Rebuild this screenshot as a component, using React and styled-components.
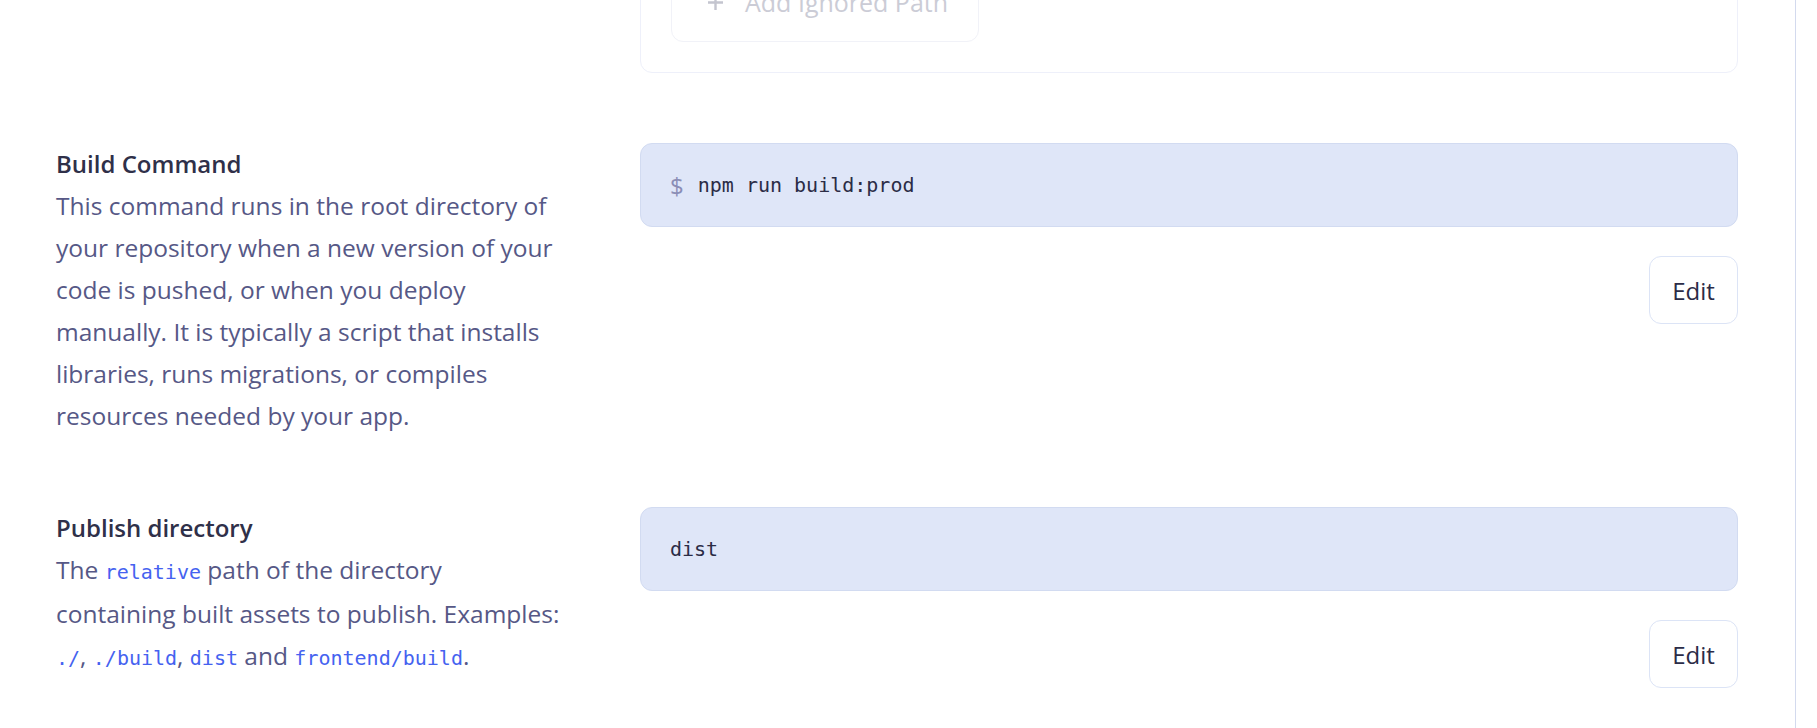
import React from "react";
import styled, { createGlobalStyle } from "styled-components";

const GlobalStyle = createGlobalStyle`
  html, body {
    margin: 0;
    padding: 0;
    background: #ffffff;
    overflow: hidden;
  }
  body {
    font-family: "Open Sans", "Noto Sans", sans-serif;
    -webkit-font-smoothing: antialiased;
  }
  * { box-sizing: border-box; }
`;

const Page = styled.div`
  display: flex;
  height: 728px;
  overflow: hidden;
  background: #ffffff;
`;

const Main = styled.main`
  width: 1796px;
  flex: none;
  border-right: 1px solid #d3daee;
  padding: 0 57px 0 56px;
  margin-top: -69px;
  display: flex;
  flex-direction: column;
  gap: 70px;
`;

const Section = styled.section`
  display: grid;
  grid-template-columns: 508px 1fr;
  column-gap: 76px;
  align-items: start;
`;

const Info = styled.div`
  display: flex;
  flex-direction: column;
`;

const Title = styled.h3`
  margin: 0;
  font-size: 24px;
  line-height: 42px;
  font-weight: 600;
  color: #2f3049;
`;

const Description = styled.p`
  margin: 0;
  font-size: 24.5px;
  line-height: 42px;
  font-weight: 400;
  color: #565886;
`;

const InlineCode = styled.code`
  font-family: "DejaVu Sans Mono", "Liberation Mono", monospace;
  font-size: 20px;
  color: #4562f0;
`;

const Controls = styled.div`
  display: flex;
  flex-direction: column;
`;

const Card = styled.div`
  border: 1px solid #eef0fa;
  border-radius: 12px;
  padding: 30px;
  display: flex;
`;

const GhostButton = styled.button`
  display: inline-flex;
  align-items: center;
  gap: 22px;
  height: 80px;
  padding: 0 30px 0 36px;
  border: 1px solid #f1f2f8;
  border-radius: 12px;
  background: #ffffff;
  color: #cbccd6;
  font-family: inherit;
  font-size: 25px;
  cursor: not-allowed;
`;

const CodeBox = styled.div`
  height: 84px;
  display: flex;
  align-items: center;
  padding: 0 29px;
  background: #dfe6f8;
  border: 1px solid #d2dbf1;
  border-radius: 12px;
  font-family: "DejaVu Sans Mono", "Liberation Mono", monospace;
  font-size: 20px;
  color: #2b2c46;
`;

const Prompt = styled.span`
  font-family: "Open Sans", "Noto Sans", sans-serif;
  font-size: 24px;
  color: #8b8eb6;
  margin-right: 14px;
`;

const Actions = styled.div`
  display: flex;
  justify-content: flex-end;
  margin-top: 29px;
`;

const EditButton = styled.button`
  width: 89px;
  height: 68px;
  border: 1px solid #dce4f6;
  border-radius: 12px;
  background: #ffffff;
  color: #2b2c47;
  font-family: inherit;
  font-size: 24px;
  cursor: pointer;
`;

const PlusIcon = () => (
  <svg width="15" height="15" viewBox="0 0 15 15" aria-hidden="true">
    <path d="M7.5 1v13M1 7.5h13" stroke="#c4c5cf" strokeWidth="2.4" strokeLinecap="square" />
  </svg>
);

export default function App() {
  return (
    <>
      <GlobalStyle />
      <Page>
        <Main>
          <Section>
            <Info />
            <Controls>
              <Card>
                <GhostButton disabled>
                  <PlusIcon />
                  Add Ignored Path
                </GhostButton>
              </Card>
            </Controls>
          </Section>

          <Section>
            <Info>
              <Title>Build Command</Title>
              <Description>
                This command runs in the root directory of your repository when a new version of
                your code is pushed, or when you deploy manually. It is typically a script that
                installs libraries, runs migrations, or compiles resources needed by your app.
              </Description>
            </Info>
            <Controls>
              <CodeBox>
                <Prompt>$</Prompt>
                npm run build:prod
              </CodeBox>
              <Actions>
                <EditButton>Edit</EditButton>
              </Actions>
            </Controls>
          </Section>

          <Section>
            <Info>
              <Title>Publish directory</Title>
              <Description>
                The <InlineCode>relative</InlineCode> path of the directory containing built assets
                to publish. Examples: <InlineCode>./</InlineCode>, <InlineCode>./build</InlineCode>,{" "}
                <InlineCode>dist</InlineCode> and <InlineCode>frontend/build</InlineCode>.
              </Description>
            </Info>
            <Controls>
              <CodeBox>dist</CodeBox>
              <Actions>
                <EditButton>Edit</EditButton>
              </Actions>
            </Controls>
          </Section>
        </Main>
      </Page>
    </>
  );
}
